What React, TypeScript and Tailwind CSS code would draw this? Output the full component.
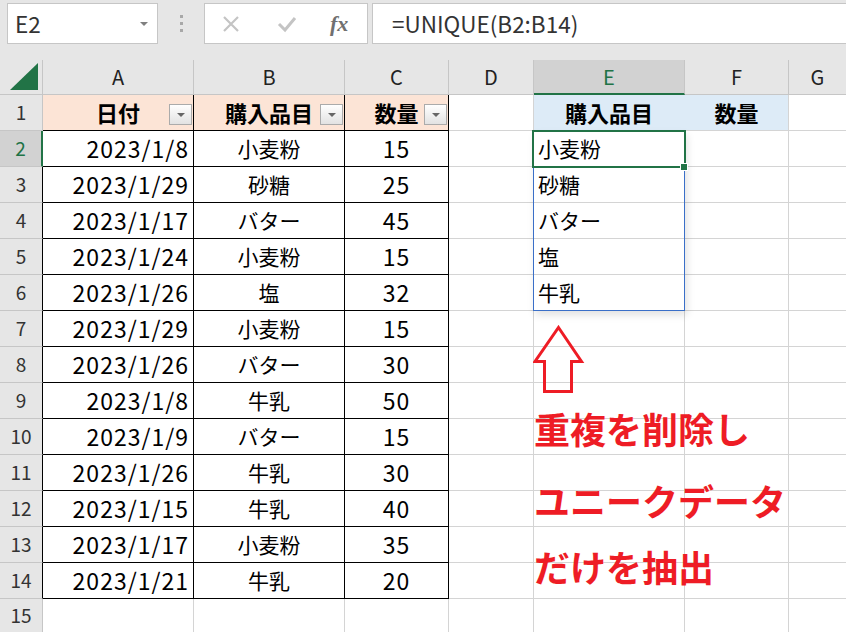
import React from 'react';

const rows: [string, string, string][] = [
  ['2023/1/8', '小麦粉', '15'],
  ['2023/1/29', '砂糖', '25'],
  ['2023/1/17', 'バター', '45'],
  ['2023/1/24', '小麦粉', '15'],
  ['2023/1/26', '塩', '32'],
  ['2023/1/29', '小麦粉', '15'],
  ['2023/1/26', 'バター', '30'],
  ['2023/1/8', '牛乳', '50'],
  ['2023/1/9', 'バター', '15'],
  ['2023/1/26', '牛乳', '30'],
  ['2023/1/15', '牛乳', '40'],
  ['2023/1/17', '小麦粉', '35'],
  ['2023/1/21', '牛乳', '20'],
];

const unique = ['小麦粉', '砂糖', 'バター', '塩', '牛乳'];

function FilterButton() {
  return (
    <div className="absolute right-[1px] top-[9px] w-[23px] h-[21px] border border-[#ababab] bg-gradient-to-b from-white to-[#e2e2e2] flex items-center justify-center">
      <div className="w-0 h-0 border-l-[4px] border-r-[4px] border-t-[4px] border-l-transparent border-r-transparent border-t-[#666]" />
    </div>
  );
}

function RowHeader({ n }: { n: number }) {
  const cls =
    n === 2
      ? 'bg-[#d2d2d2] text-[#217346] border-r-2 border-r-[#217346] border-b border-b-[#c6c6c6]'
      : n >= 3 && n <= 14
      ? 'bg-[#e6e6e6] text-[#333] border-r border-r-black border-b border-b-[#c6c6c6]'
      : 'bg-[#e6e6e6] text-[#333] border-r border-r-[#c6c6c6] border-b border-b-[#c6c6c6]';
  return <div className={'flex items-center justify-center text-[19px] ' + cls}>{n}</div>;
}

export default function App() {
  const dataRows = [];
  for (let r = 2; r <= 14; r++) {
    const [d, item, q] = rows[r - 2];
    const e = r <= 6 ? unique[r - 2] : '';
    dataRows.push(
      <React.Fragment key={r}>
        <RowHeader n={r} />
        <div className="h-[36px] flex items-center justify-end pr-[4px] border-r border-b border-black text-[23px] tracking-[1px]">{d}</div>
        <div className="h-[36px] flex items-center justify-center border-r border-b border-black">{item}</div>
        <div className="h-[36px] flex items-center justify-center border-r border-b border-black text-[23px] tracking-[1px]">{q}</div>
        <div className="h-[36px] border-r border-b border-[#d4d4d4]" />
        <div className="h-[36px] flex items-center pl-[4px] border-r border-b border-[#d4d4d4]">{e}</div>
        <div className="h-[36px] border-r border-b border-[#d4d4d4]" />
        <div className="h-[36px] border-b border-[#d4d4d4]" />
      </React.Fragment>
    );
  }

  return (
    <div className="w-[846px] h-[632px] overflow-hidden bg-white font-['Noto_Sans_CJK_JP',sans-serif] text-[21px] text-black relative">
      {/* Formula bar */}
      <div className="h-[60px] bg-[#e6e6e6] flex items-start pt-[3px] pl-[7px]">
        <div className="w-[151px] h-[41px] bg-white border border-[#c6c6c6] flex items-center justify-between pl-[7px] pr-[9px]">
          <span className="text-[22.5px] text-[#333]">E2</span>
          <div className="w-0 h-0 border-l-[4px] border-r-[4px] border-t-[4px] border-l-transparent border-r-transparent border-t-[#808080]" />
        </div>
        <div className="w-[46px] h-[41px] flex flex-col items-center justify-center gap-[4px]">
          <div className="w-[3px] h-[3px] bg-[#a8a8a8]" />
          <div className="w-[3px] h-[3px] bg-[#a8a8a8]" />
          <div className="w-[3px] h-[3px] bg-[#a8a8a8]" />
        </div>
        <div className="w-[164px] h-[41px] bg-white border border-[#c6c6c6] flex items-center pl-[17px]">
          <svg width="18" height="18" viewBox="0 0 18 18">
            <path d="M2 2 L16 16 M16 2 L2 16" stroke="#c4c4c4" strokeWidth="2.2" />
          </svg>
          <svg width="20" height="18" viewBox="0 0 20 18" className="ml-[37px]">
            <path d="M2 9 L8 15 L18 3" stroke="#c4c4c4" strokeWidth="3" fill="none" />
          </svg>
          <span className="ml-[33px] font-['Liberation_Serif',serif] italic font-bold text-[22px] text-[#707070]">fx</span>
        </div>
        <div className="ml-[4px] flex-1 h-[41px] bg-white border border-[#c6c6c6] border-r-0 flex items-center pl-[19px]">
          <span className="text-[22.5px] text-[#333]">=UNIQUE(B2:B14)</span>
        </div>
      </div>

      {/* Grid */}
      <div className="grid grid-cols-[43px_151px_151px_104px_85px_151px_104px_1fr]">
        {/* Column headers */}
        <div className="h-[35px] bg-[#e6e6e6] border-r border-b border-[#c6c6c6] flex items-end justify-end pr-[4px] pb-[4px]">
          <svg width="28" height="27" viewBox="0 0 28 27">
            <polygon points="0,27 28,27 28,0" fill="#217346" />
          </svg>
        </div>
        <div className="h-[35px] bg-[#e6e6e6] border-r border-b border-[#c6c6c6] flex items-center justify-center text-[20px] text-[#222]">A</div>
        <div className="h-[35px] bg-[#e6e6e6] border-r border-b border-[#c6c6c6] flex items-center justify-center text-[20px] text-[#222]">B</div>
        <div className="h-[35px] bg-[#e6e6e6] border-r border-b border-[#c6c6c6] flex items-center justify-center text-[20px] text-[#222]">C</div>
        <div className="h-[35px] bg-[#e6e6e6] border-r border-b border-[#c6c6c6] flex items-center justify-center text-[20px] text-[#222]">D</div>
        <div className="h-[35px] bg-[#d2d2d2] border-r border-r-[#c6c6c6] border-b-2 border-b-[#217346] flex items-center justify-center text-[20px] text-[#217346]">E</div>
        <div className="h-[35px] bg-[#e6e6e6] border-r border-b border-[#c6c6c6] flex items-center justify-center text-[20px] text-[#222]">F</div>
        <div className="h-[35px] bg-[#e6e6e6] border-b border-[#c6c6c6] flex items-center justify-center text-[20px] text-[#222]">G</div>

        {/* Row 1 */}
        <RowHeader n={1} />
        <div className="relative h-[36px] bg-[#fce4d6] flex items-center justify-center font-bold text-[22px] border-r border-b border-black">
          日付
          <FilterButton />
        </div>
        <div className="relative h-[36px] bg-[#fce4d6] flex items-center justify-center font-bold text-[22px] border-r border-b border-black">
          購入品目
          <FilterButton />
        </div>
        <div className="relative h-[36px] bg-[#fce4d6] flex items-center justify-center font-bold text-[22px] border-r border-b border-black">
          数量
          <FilterButton />
        </div>
        <div className="h-[36px] border-r border-b border-[#d4d4d4]" />
        <div className="h-[36px] bg-[#ddebf7] flex items-center justify-center font-bold text-[22px] border-r border-r-[#ddebf7] border-b border-b-[#d4d4d4]">購入品目</div>
        <div className="h-[36px] bg-[#ddebf7] flex items-center justify-center font-bold text-[22px] border-r border-r-[#d4d4d4] border-b border-b-[#d4d4d4]">数量</div>
        <div className="h-[36px] border-b border-[#d4d4d4]" />

        {dataRows}

        {/* Row 15 */}
        <div className="h-[33px] bg-[#e6e6e6] text-[#333] border-r border-[#c6c6c6] flex items-center justify-center text-[19px]">15</div>
        <div className="h-[33px] border-r border-[#d4d4d4]" />
        <div className="h-[33px] border-r border-[#d4d4d4]" />
        <div className="h-[33px] border-r border-[#d4d4d4]" />
        <div className="h-[33px] border-r border-[#d4d4d4]" />
        <div className="h-[33px] border-r border-[#d4d4d4]" />
        <div className="h-[33px] border-r border-[#d4d4d4]" />
        <div className="h-[33px]" />
      </div>

      {/* Spill range border with shadow */}
      <div className="absolute left-[533px] top-[131px] w-[152px] h-[180px] border border-[#3a6fc8] shadow-[2px_4px_8px_rgba(0,0,0,0.12)] pointer-events-none" />
      {/* Active cell */}
      <div className="absolute left-[532px] top-[130px] w-[154px] h-[38px] border-2 border-[#217346] pointer-events-none" />
      {/* Fill handle */}
      <div className="absolute left-[680px] top-[163px] w-[8px] h-[8px] bg-[#217346] border border-white" />

      {/* Arrow */}
      <svg className="absolute left-[533px] top-[325px]" width="52" height="69" viewBox="0 0 52 69">
        <polygon points="25.5,2.5 48.5,36.5 38.5,36.5 38.5,66.5 11.5,66.5 11.5,36.5 2,36.5" fill="none" stroke="#ee1c25" strokeWidth="3" strokeLinejoin="miter" />
      </svg>

      {/* Red annotation text */}
      <div className="absolute left-[534px] top-[410px] text-[36px] leading-none font-bold text-[#ee1c25]">重複を削除し</div>
      <div className="absolute left-[534px] top-[482px] text-[36px] leading-none font-bold text-[#ee1c25]">ユニークデータ</div>
      <div className="absolute left-[534px] top-[548px] text-[36px] leading-none font-bold text-[#ee1c25]">だけを抽出</div>
    </div>
  );
}
